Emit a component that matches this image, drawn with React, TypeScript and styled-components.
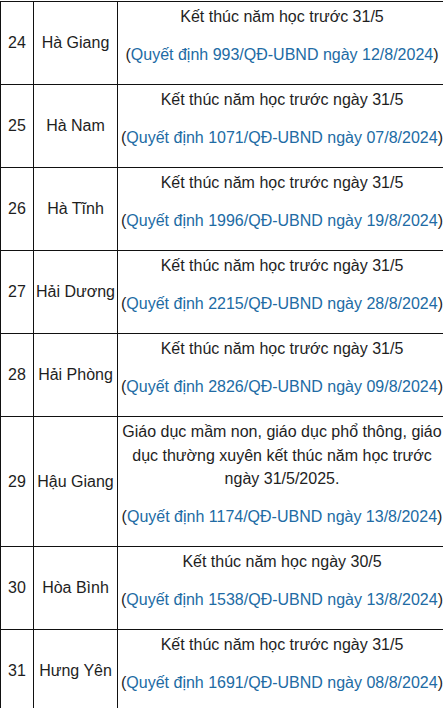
import * as React from 'react';
import styled, {createGlobalStyle} from 'styled-components';

interface Entry {
    no: number;
    province: string;
    lines: string[];
    decision: string;
    date: string;
}

const ENTRIES: Entry[] = [
    {no: 24, province: 'Hà Giang', lines: ['Kết thúc năm học trước 31/5'], decision: '993', date: '12/8/2024'},
    {no: 25, province: 'Hà Nam', lines: ['Kết thúc năm học trước ngày 31/5'], decision: '1071', date: '07/8/2024'},
    {no: 26, province: 'Hà Tĩnh', lines: ['Kết thúc năm học trước ngày 31/5'], decision: '1996', date: '19/8/2024'},
    {no: 27, province: 'Hải Dương', lines: ['Kết thúc năm học trước ngày 31/5'], decision: '2215', date: '28/8/2024'},
    {no: 28, province: 'Hải Phòng', lines: ['Kết thúc năm học trước ngày 31/5'], decision: '2826', date: '09/8/2024'},
    {
        no: 29,
        province: 'Hậu Giang',
        lines: ['Giáo dục mầm non, giáo dục phổ thông, giáo dục thường xuyên kết thúc năm học trước ngày 31/5/2025.'],
        decision: '1174',
        date: '13/8/2024',
    },
    {no: 30, province: 'Hòa Bình', lines: ['Kết thúc năm học ngày 30/5'], decision: '1538', date: '13/8/2024'},
    {no: 31, province: 'Hưng Yên', lines: ['Kết thúc năm học trước ngày 31/5'], decision: '1691', date: '08/8/2024'},
];

const GlobalStyle = createGlobalStyle`
    html, body {
        margin: 0;
        padding: 0;
        background: #fff;
        overflow: hidden;
    }
    body {
        padding-top: 1px;
        font-family: "Liberation Sans", Arial, sans-serif;
        font-size: 16px;
        color: #1e1e1e;
    }
`;

const Table = styled.table`
    width: 447px;
    border-collapse: collapse;
    table-layout: fixed;
`;

const Cell = styled.td<{$width?: number}>`
    width: ${(p) => (p.$width ? `${p.$width}px` : 'auto')};
    border: 1px solid #111;
    padding: 3px 1px;
    text-align: center;
    vertical-align: middle;
    line-height: 23.5px;
`;

const Para = styled.p`
    margin: 0 0 14.5px;
`;

const Link = styled.span`
    color: #216ba4;
`;

const App: React.FC = () => {
    return (
        <>
            <GlobalStyle />
            <Table>
                <tbody>
                    {ENTRIES.map((e) => (
                        <tr key={e.no}>
                            <Cell $width={30}>{e.no}</Cell>
                            <Cell $width={81}>{e.province}</Cell>
                            <Cell>
                                {e.lines.map((l) => (
                                    <Para key={l}>{l}</Para>
                                ))}
                                <Para>
                                    (<Link>{`Quyết định ${e.decision}/QĐ-UBND ngày ${e.date}`}</Link>)
                                </Para>
                            </Cell>
                        </tr>
                    ))}
                </tbody>
            </Table>
        </>
    );
};

export default App;
